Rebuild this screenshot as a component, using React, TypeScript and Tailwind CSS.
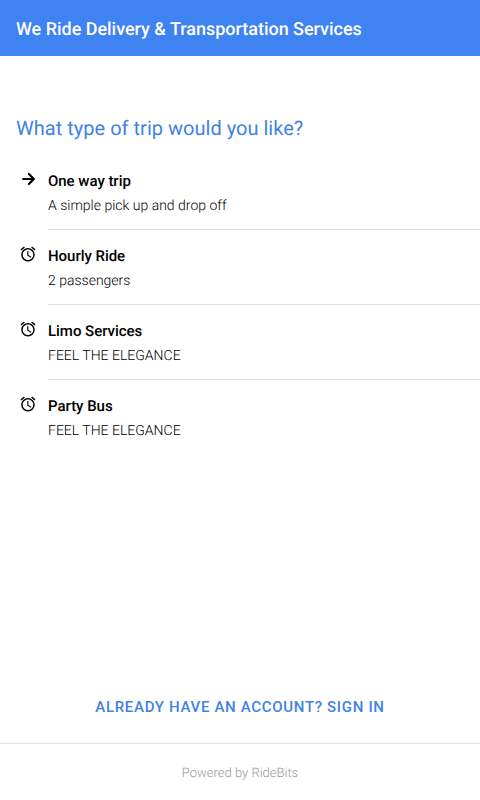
import React from 'react';
import { MdAlarm } from 'react-icons/md';

interface TripType {
  id: string;
  name: string;
  description: string;
  icon: 'arrow' | 'alarm';
}

const TRIP_TYPES: TripType[] = [
  { id: 'one-way', name: 'One way trip', description: 'A simple pick up and drop off', icon: 'arrow' },
  { id: 'hourly', name: 'Hourly Ride', description: '2 passengers', icon: 'alarm' },
  { id: 'limo', name: 'Limo Services', description: 'FEEL THE ELEGANCE', icon: 'alarm' },
  { id: 'party-bus', name: 'Party Bus', description: 'FEEL THE ELEGANCE', icon: 'alarm' },
];

const ArrowIcon: React.FC = () => (
  <svg width={18} height={18} viewBox="0 0 18 18" fill="none" stroke="currentColor" strokeWidth={2.2} strokeLinecap="round">
    <path d="M4.1 9H14.8M9.9 4L14.8 9L9.9 14" />
  </svg>
);

const TripRow: React.FC<{ trip: TripType; last: boolean }> = ({ trip, last }) => (
  <li className="flex h-[75px] pl-4">
    <div className="flex w-8 shrink-0 pt-[15px]">
      <span className="flex h-6 w-6 items-start justify-center">
        {trip.icon === 'arrow' ? <ArrowIcon /> : <MdAlarm size={18} />}
      </span>
    </div>
    <div className={last ? 'flex-1 pt-[14px]' : 'flex-1 border-b border-[#dedede] pt-[14px]'}>
      <h3 className="text-[15px] leading-6 font-medium tracking-[-0.03px]">{trip.name}</h3>
      <p className="text-sm leading-[26px] font-light">{trip.description}</p>
    </div>
  </li>
);

export default function App() {
  return (
    <div className="flex h-screen flex-col bg-white font-['Roboto',sans-serif] text-black antialiased [text-rendering:geometricPrecision]">
      <header className="flex h-14 shrink-0 items-center bg-[#3f82f1] px-4 pt-[3px]">
        <h1 className="text-lg font-medium tracking-[-0.02px] text-white">We Ride Delivery &amp; Transportation Services</h1>
      </header>

      <main className="flex flex-1 flex-col">
        <h2 className="mt-[58px] px-4 text-xl leading-7 tracking-[0.02px] text-[#3f82e5]">What type of trip would you like?</h2>
        <ul className="mt-[13px]">
          {TRIP_TYPES.map((trip, i) => (
            <TripRow key={trip.id} trip={trip} last={i === TRIP_TYPES.length - 1} />
          ))}
        </ul>
        <button className="mt-auto mb-[18px] h-9 text-[15px] font-medium tracking-[0.68px] text-[#3f82e5]">
          ALREADY HAVE AN ACCOUNT? SIGN IN
        </button>
      </main>

      <footer className="flex h-[57px] shrink-0 items-center justify-center border-t border-[#e4e4e4] pt-[3px] text-[13px] font-light text-[#999]">
        Powered by RideBits
      </footer>
    </div>
  );
}
